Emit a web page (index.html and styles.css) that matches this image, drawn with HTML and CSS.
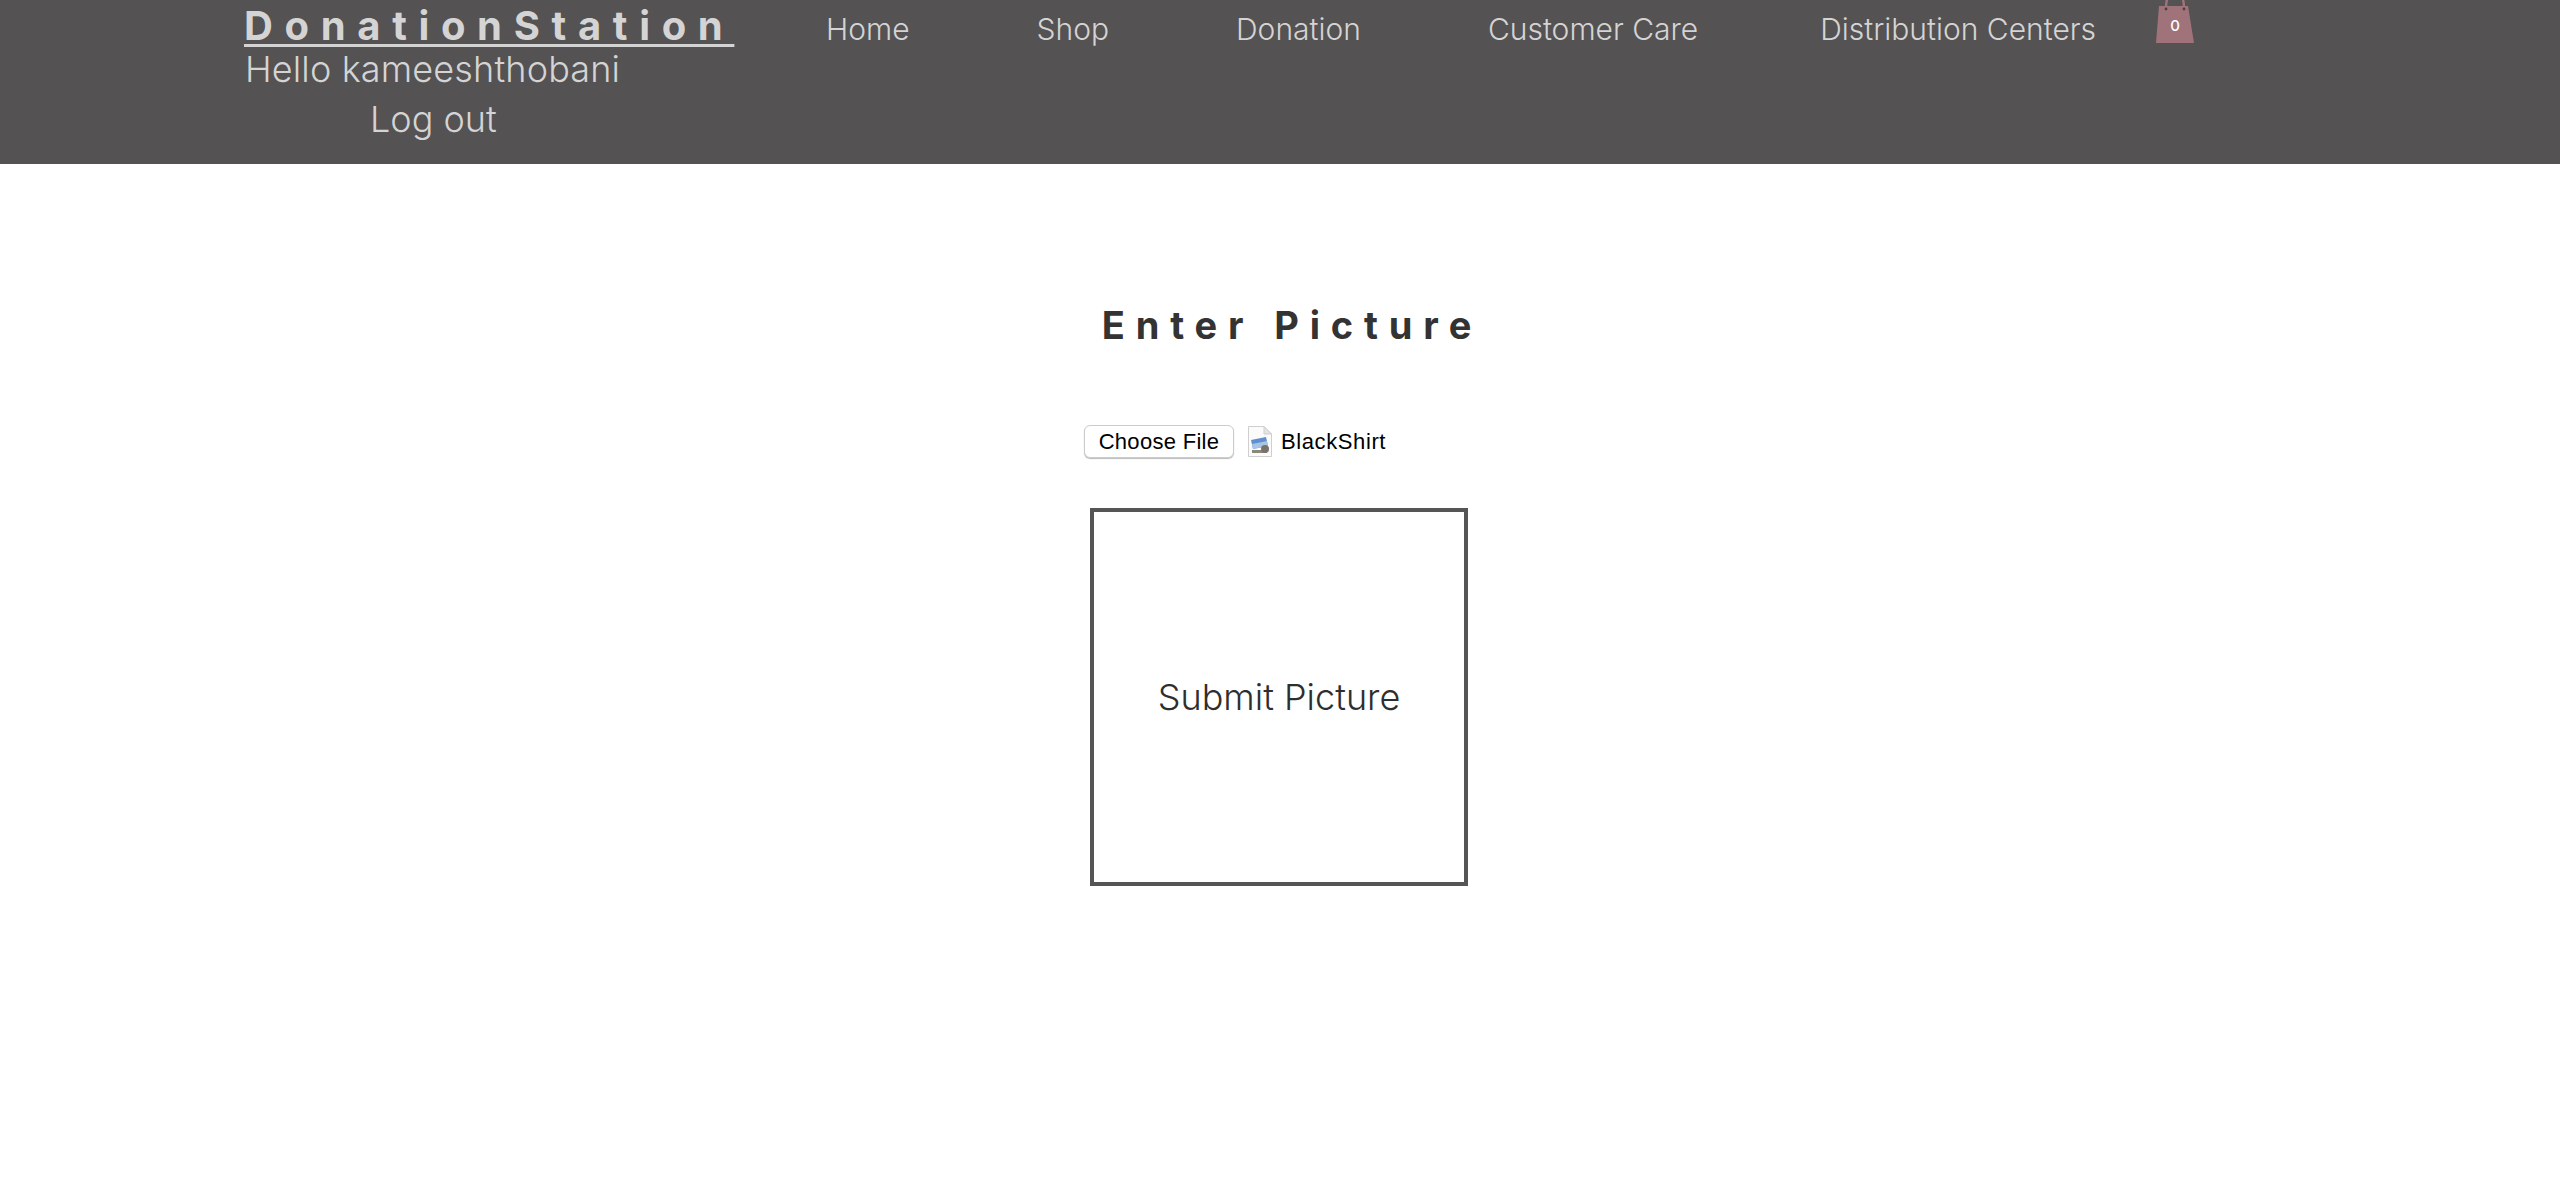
FILE: index.html
```html
<!DOCTYPE html>
<html>
<head>
<meta charset="UTF-8">
<title>DonationStation - Enter Picture</title>
<link rel="stylesheet" href="styles.css">
</head>
<body>

<div class="header">
  <div class="account">
    <a class="brand" href="#">DonationStation</a>
    <div class="hello">Hello kameeshthobani</div>
    <a class="logout" href="#">Log out</a>
  </div>
  <div class="nav">
    <a href="#">Home</a>
    <a href="#">Shop</a>
    <a href="#">Donation</a>
    <a href="#">Customer Care</a>
    <a class="nav-last" href="#">Distribution Centers</a>
  </div>
  <a class="cart" href="#">
    <svg width="38" height="44" viewBox="0 0 38 44">
      <path d="M10 9C10 -4 13 -6 19 -6S28 -4 28 9" fill="none" stroke="#a0737a" stroke-width="2.4"/>
      <path d="M3 6H32L38 43H0Z" fill="#a0737a"/>
      <circle cx="10" cy="9" r="1.4" fill="#4a4040"/>
      <circle cx="28" cy="9" r="1.4" fill="#4a4040"/>
    </svg>
    <span class="cart-count">0</span>
  </a>
</div>

<div class="main">
  <h2 class="title">Enter Picture</h2>
  <div class="form">
    <div class="file-row">
      <button class="file-btn" type="button">Choose File</button>
      <svg class="file-icon" width="24" height="31" viewBox="0 0 24 31">
        <path d="M.5.5H16L23.5 8V30.5H.5Z" fill="#fbfbfb" stroke="#cfcfcf"/>
        <path d="M16 .5V8H23.5Z" fill="#e4e4e4" stroke="#cfcfcf"/>
        <path d="M3 14L18 11L20 20L5 23Z" fill="#5f8fcf"/>
        <path d="M4 18L19 15L20 20L5 23Z" fill="#a9c4e6"/>
        <path d="M4 24H19V27H4Z" fill="#8c8778"/>
        <circle cx="17" cy="23" r="4" fill="#77746b"/>
      </svg>
      <span class="file-name">BlackShirt</span>
    </div>
    <button class="submit-box" type="button">Submit Picture</button>
  </div>
</div>

</body>
</html>
```

FILE: styles.css
```css
*{ margin: 0; padding: 0; box-sizing: border-box; }
html, body{ height: 100%; }
body{ background: #fff; font-family: "Inter", "Lato", "Liberation Sans", sans-serif; color: #2f2e2e; overflow: hidden; }
a{ text-decoration: none; color: #d4d4d4; }

.header{ display: flex; align-items: flex-start; height: 164px; padding-left: 244px; background: #545253; }
.account{ width: 490px; margin-right: 92px; display: flex; flex-direction: column; }
.brand{ margin-top: 1px; font-size: 40px; line-height: 50px; font-weight: 700; letter-spacing: 11.65px; text-decoration: underline; text-decoration-thickness: 3px; text-underline-offset: 4px; white-space: nowrap; }
.hello{ padding-left: 1px; margin-top: -7px; font-size: 36px; line-height: 50px; font-weight: 300; letter-spacing: 0.15px; color: #d4d4d4; white-space: nowrap; }
.logout{ padding-left: 126px; font-size: 36px; line-height: 50px; font-weight: 300; white-space: nowrap; }

.nav{ display: flex; gap: 127px; padding-top: 8px; font-size: 30px; line-height: 42px; font-weight: 300; white-space: nowrap; }
.nav-last{ margin-left: -5px; }
.cart{ position: relative; display: block; width: 38px; height: 44px; margin-left: 60px; }
.cart svg{ display: block; }
.cart-count{ position: absolute; left: 0; right: 0; top: 16px; text-align: center; font-size: 15px; line-height: 20px; font-weight: 500; color: #fff; }

.main{ display: flex; flex-direction: column; align-items: center; padding-top: 138px; }
.title{ font-size: 38px; line-height: 46px; font-weight: 700; letter-spacing: 10.85px; color: #333; text-align: center; margin-left: 24px; }
.form{ width: 392px; margin-top: 77px; display: flex; flex-direction: column; }
.file-row{ display: flex; align-items: center; height: 33px; font-family: "Liberation Sans", Arial, sans-serif; font-size: 22px; letter-spacing: 0.3px; color: #000; }
.file-btn{ width: 150px; height: 33px; background: #fff; border: 1px solid #ccc; border-radius: 6px; box-shadow: 0 1px 1px #bbb; font: inherit; letter-spacing: inherit; color: #000; }
.file-icon{ margin-left: 14px; }
.file-name{ margin-left: 9px; letter-spacing: 0.6px; }
.submit-box{ width: 378px; height: 378px; margin: 50px 0 0 6px; display: flex; align-items: center; justify-content: center; background: #fff; border: 4px solid #555; font-family: inherit; font-size: 36px; font-weight: 300; color: #2f2e2e; }
```
